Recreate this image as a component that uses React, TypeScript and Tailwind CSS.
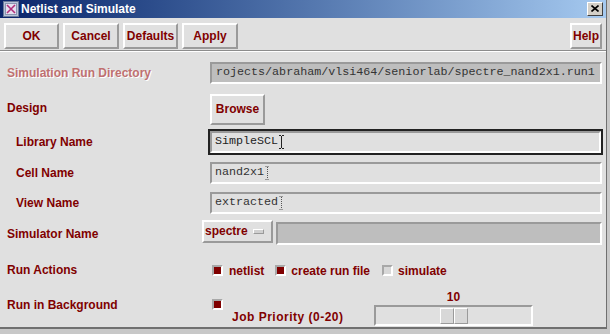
import React from 'react';

const raised = 'border-2 border-t-white border-l-white border-b-[#9a9a9a] border-r-[#9a9a9a] bg-[#e0e0e0]';
const sunken = 'border-2 border-t-[#9a9a9a] border-l-[#9a9a9a] border-b-white border-r-white';

const Btn: React.FC<{ label: string; w: string; h?: string; extra?: string }> = ({ label, w, h = 'h-[26px]', extra = '' }) => (
  <div className={`${raised} ${w} ${h} ${extra} flex items-center justify-center text-[12px] font-bold text-[#800000]`}>
    {label}
  </div>
);

const Check: React.FC<{ on?: boolean }> = ({ on }) => (
  <div className={`w-[11px] h-[11px] shrink-0 border-2 border-t-[#a8a8a8] border-l-[#a8a8a8] border-b-white border-r-white ${on ? 'bg-[#800000]' : 'bg-[#d8d8d8]'}`} />
);

const Cursor: React.FC<{ dotted?: boolean }> = ({ dotted }) => (
  <svg width="5" height="14" viewBox="0 0 5 14" className="ml-[1px]">
    {dotted ? (
      <g stroke="#555" strokeWidth="1" strokeDasharray="1 1">
        <path d="M0.5 0.5h4M2.5 1v12M0.5 13.5h4" />
      </g>
    ) : (
      <g stroke="#222" strokeWidth="1">
        <path d="M0 0.5h2M3 0.5h2M2.5 1v12M0 13.5h2M3 13.5h2" />
      </g>
    )}
  </svg>
);

const Label: React.FC<{ text: string; w?: string; indent?: boolean; extra?: string }> = ({ text, w = 'w-[210px]', indent, extra = '' }) => (
  <div className={`${w} shrink-0 ${indent ? 'pl-[16px]' : 'pl-[7px]'} ${extra} text-[12px] font-bold text-[#800000] leading-[14px]`}>
    {text}
  </div>
);

const Field: React.FC<{ value: string; dotted?: boolean }> = ({ value, dotted }) => (
  <div className={`${sunken} flex-1 mr-[4px] h-[22px] bg-[#e0e0e0] flex items-center pl-[3px] font-['Liberation_Mono'] text-[11.7px] text-[#333]`}>
    {value}
    <Cursor dotted={dotted} />
  </div>
);

export default function App() {
  return (
    <div className="w-[610px] h-[334px] bg-[#c8c8c8] overflow-hidden font-['Liberation_Sans',Arial,sans-serif]">
      <div className="w-[607px] h-[329px] bg-[#e0e0e0] border-r border-b-2 border-r-[#707070] border-b-[#707070] flex flex-col">
        {/* title bar */}
        <div className="h-[18px] flex items-center bg-gradient-to-r from-[#0a246a] to-[#a6caf0] pl-[3px] pr-[3px]">
          <svg width="16" height="16" viewBox="0 0 16 16">
            <rect x="0.5" y="0.5" width="15" height="15" fill="#b8c4d8" stroke="#6b7a99" />
            <rect x="2.5" y="2.5" width="11" height="11" fill="#e6e0f0" stroke="#8a96b0" />
            <path d="M4 4l8 8M12 4l-8 8" stroke="#b0307a" strokeWidth="1.6" />
          </svg>
          <span className="ml-[2px] text-white text-[12px] font-bold leading-[14px]">Netlist and Simulate</span>
          <div className="ml-auto w-[16px] h-[14px] bg-[#d4d0c8] border border-t-white border-l-white border-b-[#404040] border-r-[#404040] flex items-center justify-center">
            <svg width="8" height="7" viewBox="0 0 8 7">
              <path d="M0.5 0.5l7 6M7.5 0.5l-7 6" stroke="#000" strokeWidth="1.6" />
            </svg>
          </div>
        </div>

        {/* button row */}
        <div className="flex pl-[4px] pr-[4px] pt-[5px] gap-[4px]">
          <Btn label="OK" w="w-[55px]" />
          <Btn label="Cancel" w="w-[56px]" />
          <Btn label="Defaults" w="w-[55px]" />
          <Btn label="Apply" w="w-[56px]" />
          <Btn label="Help" w="w-[32px]" extra="ml-auto" />
        </div>
        <div className="mt-[1px] h-[2px] border-t border-t-[#8c8c8c] border-b border-b-white" />

        {/* Simulation Run Directory */}
        <div className="flex items-center mt-[10px] h-[22px]">
          <Label text="Simulation Run Directory" extra="text-[#c07070] [text-shadow:1px_1px_0_#ffffff]" />
          <div className={`${sunken} flex-1 mr-[4px] h-[22px] bg-[#bebebe] flex items-center pl-[4px] font-['Liberation_Mono'] text-[11.7px] text-[#333] whitespace-nowrap overflow-hidden`}>
            rojects/abraham/vlsi464/seniorlab/spectre_nand2x1.run1
          </div>
        </div>

        {/* Design */}
        <div className="flex items-center mt-[10px] h-[31px]">
          <Label text="Design" extra="pb-[2px]" />
          <Btn label="Browse" w="w-[55px]" h="h-[31px]" />
        </div>

        {/* Library Name */}
        <div className="flex items-center mt-[4px] h-[26px]">
          <Label text="Library Name" indent w="w-[208px]" />
          <div className="flex-1 mr-[3px] h-[26px] border-2 border-[#222] flex">
            <div className={`${sunken} flex-1 bg-[#e0e0e0] flex items-center pl-[3px] font-['Liberation_Mono'] text-[11.7px] text-[#222]`}>
              SimpleSCL
              <Cursor />
            </div>
          </div>
        </div>

        {/* Cell Name */}
        <div className="flex items-center mt-[7px] h-[22px]">
          <Label text="Cell Name" indent />
          <Field value="nand2x1" dotted />
        </div>

        {/* View Name */}
        <div className="flex items-center mt-[8px] h-[22px]">
          <Label text="View Name" indent />
          <Field value="extracted" dotted />
        </div>

        {/* Simulator Name */}
        <div className="flex items-start mt-[6px] h-[25px]">
          <Label text="Simulator Name" w="w-[202px]" extra="pt-[7px]" />
          <div className={`${raised} w-[71px] h-[23px] flex items-center pl-[1px]`}>
            <span className="text-[12px] font-bold text-[#800000]">spectre</span>
            <div className="ml-[5px] w-[11px] h-[5px] border border-t-white border-l-white border-b-[#9a9a9a] border-r-[#9a9a9a] bg-[#d0d0d0]" />
          </div>
          <div className={`${sunken} ml-[3px] mt-[2px] flex-1 mr-[4px] h-[23px] bg-[#bebebe]`} />
        </div>

        {/* Run Actions */}
        <div className="flex items-center mt-[15px] h-[22px] text-[12px] font-bold text-[#800000]">
          <Label text="Run Actions" w="w-[212px]" extra="pb-[1px]" />
          <Check on />
          <span className="ml-[6px]">netlist</span>
          <div className="ml-[11px]"><Check on /></div>
          <span className="ml-[5px]">create run file</span>
          <div className="ml-[12px]"><Check /></div>
          <span className="ml-[5px]">simulate</span>
        </div>

        {/* Run in Background */}
        <div className="flex items-start mt-[8px] h-[38px] text-[12px] font-bold text-[#800000] leading-[14px]">
          <Label text="Run in Background" w="w-[212px]" extra="pt-[9px]" />
          <div className="mt-[10px]"><Check on /></div>
          <div className="w-[151px] pl-[9px] pt-[21px] tracking-[0.5px]">Job Priority (0-20)</div>
          <div className="w-[159px] flex flex-col items-center pt-[1px]">
            <span>10</span>
            <div className={`${sunken} mt-[1px] w-[159px] h-[21px] bg-[#e0e0e0] flex items-center pl-[64px]`}>
              <div className="flex h-[16px]">
                <div className="w-[14px] h-[16px] border border-t-white border-l-white border-b-[#9a9a9a] border-r-[#9a9a9a] bg-[#d8d8d8]" />
                <div className="w-[14px] h-[16px] border border-t-white border-l-white border-b-[#9a9a9a] border-r-[#9a9a9a] bg-[#d8d8d8]" />
              </div>
            </div>
          </div>
        </div>
      </div>
    </div>
  );
}
